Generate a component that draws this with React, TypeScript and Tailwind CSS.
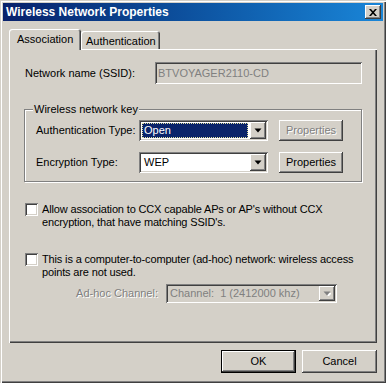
import React from "react";

const raised =
  "shadow-[inset_-1px_-1px_0_#404040,inset_1px_1px_0_#ffffff,inset_-2px_-2px_0_#808080,inset_2px_2px_0_#d4d0c8]";
const sunken =
  "shadow-[inset_1px_1px_0_#808080,inset_-1px_-1px_0_#ffffff,inset_2px_2px_0_#404040,inset_-2px_-2px_0_#d4d0c8]";

function Arrow({ disabled }: { disabled?: boolean }) {
  return (
    <svg width="8" height="5" viewBox="0 0 8 5" className="block">
      {disabled && <path d="M2 2h7L5.5 5.5z" fill="#ffffff" />}
      <path d="M0.5 0.5h7L4 4.5z" fill={disabled ? "#808080" : "#000000"} />
    </svg>
  );
}

function DropBtn({ disabled }: { disabled?: boolean }) {
  return (
    <div className={`w-[16px] h-full bg-[#d4d0c8] flex items-center justify-center ${raised}`}>
      <Arrow disabled={disabled} />
    </div>
  );
}

function Button({
  children,
  w,
  disabled,
  isDefault,
  h = "h-[21px]",
}: {
  children: React.ReactNode;
  w: string;
  disabled?: boolean;
  isDefault?: boolean;
  h?: string;
}) {
  return (
    <div
      className={`${w} ${h} bg-[#d4d0c8] flex items-center justify-center ${
        isDefault ? "border border-black" : ""
      }`}
    >
      <div className={`w-full h-full flex items-center justify-center ${raised}`}>
        <span
          className={
            disabled
              ? "text-[#808080] [text-shadow:1px_1px_0_#ffffff]"
              : "text-black"
          }
        >
          {children}
        </span>
      </div>
    </div>
  );
}

function Checkbox() {
  return <div className={`w-[13px] h-[13px] shrink-0 bg-white ${sunken}`} />;
}

export default function App() {
  return (
    <div
      className="w-[386px] h-[383px] bg-[#d4d0c8] p-[3px] flex flex-col text-[11px] leading-[13px] text-black font-['Liberation_Sans',Arial,sans-serif] shadow-[inset_1px_1px_0_#d4d0c8,inset_2px_2px_0_#ffffff,inset_-1px_-1px_0_#404040,inset_-2px_-2px_0_#808080]"
    >
      {/* Title bar */}
      <div className="h-[18px] bg-linear-to-r from-[#08216b] to-[#1a86d8] flex items-center justify-between pl-[3px] pr-[2px]">
        <span className="text-white font-bold text-[12px]">Wireless Network Properties</span>
        <div className={`w-[16px] h-[14px] bg-[#d4d0c8] flex items-center justify-center ${raised}`}>
          <svg width="8" height="7" viewBox="0 0 8 7" className="block">
            <path d="M0 0h2l2 2.2L6 0h2L5 3.5 8 7H6L4 4.8 2 7H0l3-3.5z" fill="#000" />
          </svg>
        </div>
      </div>

      {/* Tabs */}
      <div className="mt-[8px] pl-[6px] h-[20px] flex items-end relative z-10">
        <div className="w-[72px] h-[21px] -mb-[1px] bg-[#d4d0c8] rounded-t-[3px] shadow-[inset_1px_1px_0_#ffffff,inset_-1px_0_0_#404040,inset_-2px_0_0_#808080] flex items-start pt-[4px] pl-[8px]">
          Association
        </div>
        <div className="w-[79px] h-[18px] bg-[#d4d0c8] rounded-t-[3px] shadow-[inset_1px_1px_0_#ffffff,inset_-1px_0_0_#404040,inset_-2px_0_0_#808080] flex items-start pt-[4px] pl-[5px]">
          Authentication
        </div>
      </div>

      {/* Panel */}
      <div className="mx-[6px] h-[294px] shrink-0 px-[15px] flex flex-col shadow-[inset_1px_1px_0_#ffffff,inset_-1px_-1px_0_#404040,inset_-2px_-2px_0_#808080]">
        {/* SSID */}
        <div className="mt-[13px] h-[22px] flex items-center">
          <div className="w-[131px] pl-[1px]">Network name (SSID):</div>
          <div className={`flex-1 h-full bg-[#d4d0c8] flex items-center pl-[3px] text-[#808080] ${sunken}`}>
            BTVOYAGER2110-CD
          </div>
        </div>

        {/* Group box */}
        <div className="mt-[25px] h-[73px] relative border border-[#808080] shadow-[inset_1px_1px_0_#ffffff,1px_1px_0_#ffffff] pt-[10px] pl-[11px] flex flex-col gap-[11px]">
          <div className="absolute -top-[7px] left-[8px] bg-[#d4d0c8] px-[1px]">Wireless network key</div>
          <div className="h-[21px] flex items-center">
            <div className="w-[103px]">Authentication Type:</div>
            <div className={`w-[129px] h-[21px] bg-white p-[2px] flex ${sunken}`}>
              <div className="flex-1 p-[1px] pr-[2px]">
                <div className="h-full bg-[#0a246a] border border-dotted border-[#e0e0a0] text-white flex items-center pl-[1px]">
                  Open
                </div>
              </div>
              <DropBtn />
            </div>
            <div className="ml-[11px] -mt-[1px]">
              <Button w="w-[64px]" disabled>
                Properties
              </Button>
            </div>
          </div>
          <div className="h-[21px] flex items-center">
            <div className="w-[103px]">Encryption Type:</div>
            <div className={`w-[129px] h-[21px] bg-white p-[2px] flex ${sunken}`}>
              <div className="flex-1 flex items-center pl-[3px]">WEP</div>
              <DropBtn />
            </div>
            <div className="ml-[11px]">
              <Button w="w-[64px]">Properties</Button>
            </div>
          </div>
        </div>

        {/* Checkbox 1 */}
        <div className="mt-[21px] pl-[1px] flex items-start gap-[4px]">
          <Checkbox />
          <div className="whitespace-nowrap tracking-[-0.15px]">
            Allow association to CCX capable APs or AP's without CCX
            <br />
            encryption, that have matching SSID's.
          </div>
        </div>

        {/* Checkbox 2 */}
        <div className="mt-[24px] pl-[1px] flex items-start gap-[4px]">
          <Checkbox />
          <div className="whitespace-nowrap tracking-[-0.15px]">
            This is a computer-to-computer (ad-hoc) network: wireless access
            <br />
            points are not used.
          </div>
        </div>

        {/* Ad-hoc channel */}
        <div className="mt-[5px] h-[19px] flex items-center">
          <div className="w-[134px] text-right text-[#808080] [text-shadow:1px_1px_0_#ffffff]">Ad-hoc Channel:</div>
          <div className={`ml-[8px] w-[171px] h-[19px] bg-[#d4d0c8] p-[2px] flex ${sunken}`}>
            <div className="flex-1 flex items-center pl-[2px] text-[#808080]">Channel:&nbsp; 1 (2412000 khz)</div>
            <DropBtn disabled />
          </div>
        </div>
      </div>

      {/* Buttons */}
      <div className="mt-[7px] pr-[6px] flex justify-end gap-[6px]">
        <Button w="w-[75px]" h="h-[23px]" isDefault>
          OK
        </Button>
        <Button w="w-[75px]" h="h-[23px]">
          Cancel
        </Button>
      </div>
    </div>
  );
}
